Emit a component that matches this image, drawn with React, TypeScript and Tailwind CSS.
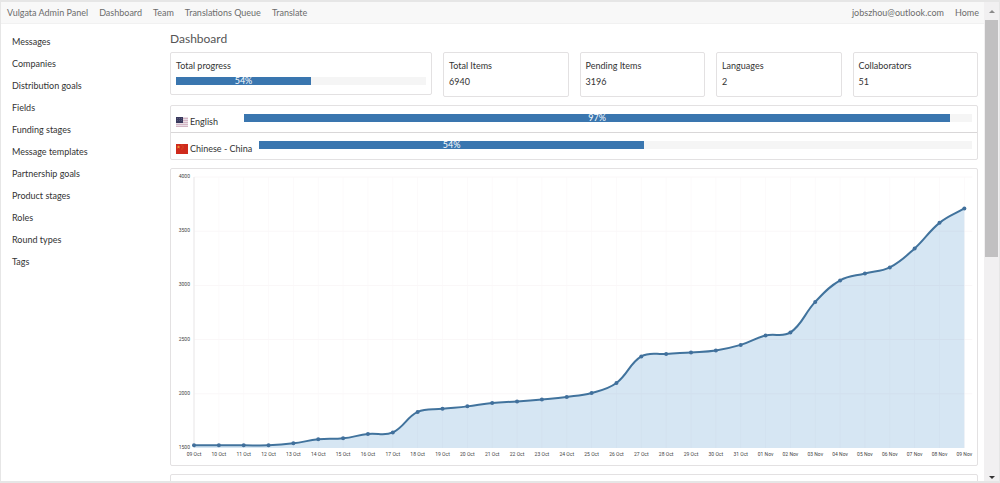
const navLinks = ["Dashboard", "Team", "Translations Queue", "Translate"]

const sections = [
  "Messages",
  "Companies",
  "Distribution goals",
  "Fields",
  "Funding stages",
  "Message templates",
  "Partnership goals",
  "Product stages",
  "Roles",
  "Round types",
  "Tags",
]

const stats = [
  { label: "Total Items", value: 6940 },
  { label: "Pending Items", value: 3196 },
  { label: "Languages", value: 2 },
  { label: "Collaborators", value: 51 },
]

const items = [
  1525, 1525, 1525, 1525, 1543, 1580, 1589, 1630, 1644, 1833, 1861, 1884, 1916, 1930, 1948, 1971,
  2008, 2100, 2345, 2368, 2382, 2400, 2451, 2538, 2566, 2848, 3046, 3110, 3166, 3341, 3577, 3710,
]

// The series starts on 09 Oct and runs into November
const days = items.map((_, i) => {
  const day = i + 9
  return day > 31 ? `${String(day - 31).padStart(2, "0")} Nov` : `${String(day).padStart(2, "0")} Oct`
})

const LEFT = 23
const STEP = 24.85
const BASE = 279
const RIGHT = LEFT + STEP * (items.length - 1)

const toY = (value: number) => BASE - ((value - 1500) / 500) * 54.2

const points = items.map((value, i) => ({ x: LEFT + i * STEP, y: toY(value) }))

// Spline with control points kept proportional to the neighbouring distances
function curve(tension = 0.4) {
  const controls = points.map((p, i) => {
    const prev = points[i - 1] ?? p
    const next = points[i + 1] ?? p
    const d1 = Math.hypot(p.x - prev.x, p.y - prev.y)
    const d2 = Math.hypot(next.x - p.x, next.y - p.y)
    const a = (tension * d1) / (d1 + d2)
    const b = (tension * d2) / (d1 + d2)
    return {
      inX: p.x - a * (next.x - prev.x),
      inY: p.y - a * (next.y - prev.y),
      outX: p.x + b * (next.x - prev.x),
      outY: p.y + b * (next.y - prev.y),
    }
  })
  return points
    .map((p, i) => {
      if (i === 0) return `M${p.x} ${p.y}`
      const from = controls[i - 1]
      const to = controls[i]
      return `C${from.outX} ${from.outY} ${to.inX} ${to.inY} ${p.x} ${p.y}`
    })
    .join(" ")
}

function Progress({ percent, label }: { percent: number; label: string }) {
  return (
    <div
      role="progressbar"
      aria-label={label}
      aria-valuenow={percent}
      className="h-2 flex-1 bg-[#f5f5f5]"
    >
      <div
        className="h-2 bg-[#3a76af] text-center leading-2 text-white"
        style={{ width: `${percent}%` }}
      >
        {percent}%
      </div>
    </div>
  )
}

function UsFlag() {
  return (
    <svg width="12" height="10" viewBox="0 0 12 10" className="shrink-0">
      <rect width="12" height="10" fill="#e9dfe6" />
      {[1, 3, 5, 7, 9].map((y) => (
        <rect key={y} y={y} width="12" height="1" fill="#d3b4c4" />
      ))}
      <rect width="7" height="6" fill="#3a3a5e" />
      <path d="M1 1.5h5M1 3.5h5" stroke="#6d6d8c" strokeWidth="0.6" strokeDasharray="1 1" />
    </svg>
  )
}

function ChinaFlag() {
  return (
    <svg width="12" height="10" viewBox="0 0 12 10" className="shrink-0">
      <rect width="12" height="10" fill="#cf2a1c" />
      <path d="M2.5 1.2l.5 1.3h1.3l-1 .8.4 1.3-1.2-.8-1.2.8.4-1.3-1-.8H2z" fill="#f0a03a" />
      <path d="M5.5 1h.8M6.6 2.2h.8M6.6 3.8h.8M5.5 5h.8" stroke="#e8802f" strokeWidth="0.7" />
    </svg>
  )
}

const languages = [
  { name: "English", percent: 97, Flag: UsFlag },
  { name: "Chinese - China", percent: 54, Flag: ChinaFlag },
]

function ItemsChart() {
  const line = curve()
  return (
    <svg viewBox="0 0 806 296" className="block h-auto w-full" role="img" aria-label="Items per day">
      {points.map((p) => (
        <line key={p.x} x1={p.x} x2={p.x} y1="8" y2={BASE} stroke="#fcfafb" />
      ))}
      {[2000, 2500, 3000, 3500, 4000].map((v) => (
        <line key={v} x1={LEFT} x2={RIGHT + 8} y1={toY(v)} y2={toY(v)} stroke="#faf7f8" />
      ))}
      <line x1={LEFT} x2={LEFT} y1="8" y2={BASE} stroke="#e9e7e8" />
      <path d={`${line} L${RIGHT} ${BASE} L${LEFT} ${BASE} Z`} fill="#3f88c5" fillOpacity="0.21" />
      <path d={line} fill="none" stroke="#41739d" strokeWidth="2" />
      {points.map((p) => (
        <circle key={p.x} cx={p.x} cy={p.y} r="2" fill="#41709c" />
      ))}
      <g fill="#444" fontSize="5" className="font-['Roboto',sans-serif]">
        {[1500, 2000, 2500, 3000, 3500, 4000].map((v) => (
          <text key={v} x={LEFT - 4} y={toY(v) + 1} textAnchor="end">
            {v}
          </text>
        ))}
        {days.map((day, i) => (
          <text key={day} x={points[i].x} y={BASE + 8} textAnchor="middle">
            {day}
          </text>
        ))}
      </g>
    </svg>
  )
}

export default function App() {
  return (
    <div className="flex h-screen overflow-hidden border-x border-t-2 border-b-2 border-[#e6e6e6] bg-white font-['Lato',sans-serif] text-[9px] leading-4 text-[#333]">
      <div className="min-w-0 flex-1 overflow-hidden">
        <header className="flex h-[22px] items-center justify-between border-b border-[#f1f1f1] bg-[#f8f8f8] pr-[5px] pl-[6px] text-[#6c6c6c]">
          <nav className="flex gap-[11px]">
            <a href="#">Vulgata Admin Panel</a>
            {navLinks.map((link) => (
              <a key={link} href="#">
                {link}
              </a>
            ))}
          </nav>
          <nav className="flex gap-[11px]">
            <a href="#">jobszhou@outlook.com</a>
            <a href="#">Home</a>
          </nav>
        </header>

        <div className="flex">
          <aside className="w-[169px] shrink-0 pt-[7px] pl-[11px]">
            <ul>
              {sections.map((section) => (
                <li key={section} className="leading-[22px]">
                  <a href="#">{section}</a>
                </li>
              ))}
            </ul>
          </aside>

          <main className="min-w-0 flex-1 pt-[7px] pr-[6px]">
            <h1 className="mb-[5px] text-[12px] leading-4 text-[#555]">Dashboard</h1>

            <div className="mb-2 grid grid-cols-6 items-start gap-[11px]">
              <section className="col-span-2 rounded-xs border border-[#e3e1e2] px-[5px] pt-[5px] pb-[9px]">
                <h2 className="mb-[3px]">Total progress</h2>
                <Progress percent={54} label="Total progress" />
              </section>
              {stats.map((stat) => (
                <section key={stat.label} className="rounded-xs border border-[#e3e1e2] p-[5px] pb-[6px]">
                  <h2>{stat.label}</h2>
                  <p>{stat.value}</p>
                </section>
              ))}
            </div>

            <ul className="mb-2 divide-y divide-[#d9d7d8] rounded-xs border border-[#e3e1e2]">
              {languages.map(({ name, percent, Flag }) => (
                <li key={name} className="flex gap-[7px] px-[5px] pt-2 pb-[2px]">
                  <div className="flex min-w-[61px] items-center gap-[2px]">
                    <Flag />
                    {name}
                  </div>
                  <Progress percent={percent} label={name} />
                </li>
              ))}
            </ul>

            <section className="mb-2 rounded-xs border border-[#e3e1e2]">
              <ItemsChart />
            </section>
            <section className="h-10 rounded-xs border border-[#e3e1e2]" />
          </main>
        </div>
      </div>

      <div className="flex w-[15px] shrink-0 flex-col items-center bg-[#f1f0f1]">
        <button type="button" aria-label="Scroll up" className="flex h-[18px] items-center">
          <svg width="6" height="3" viewBox="0 0 6 3">
            <path d="M0 3L3 0l3 3z" fill="#8a8a8a" />
          </svg>
        </button>
        <div className="h-[237px] w-[13px] bg-[#c1c0c1]" />
        <button type="button" aria-label="Scroll down" className="mt-auto flex h-2 items-center">
          <svg width="6" height="3" viewBox="0 0 6 3">
            <path d="M0 0h6L3 3z" fill="#333" />
          </svg>
        </button>
      </div>
    </div>
  )
}
